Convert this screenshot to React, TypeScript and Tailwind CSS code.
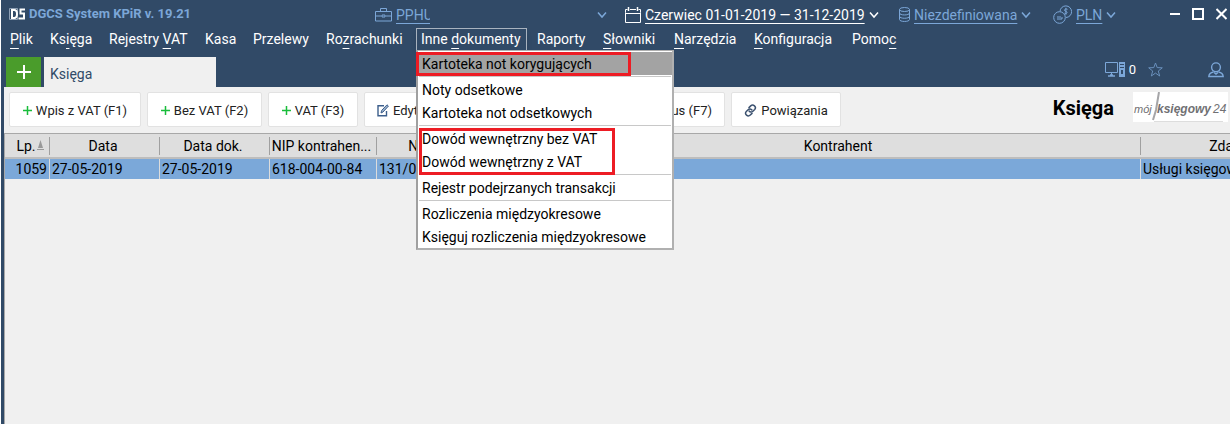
import React from 'react';

type MenuEntry = { before: string; key: string; after: string; open?: boolean };

const menuEntries: MenuEntry[] = [
  { before: '', key: 'P', after: 'lik' },
  { before: 'Ks', key: 'i', after: 'ęga' },
  { before: 'Rejestry ', key: 'V', after: 'AT' },
  { before: 'Kasa', key: '', after: '' },
  { before: 'Przelewy', key: '', after: '' },
  { before: 'Ro', key: 'z', after: 'rachunki' },
  { before: 'Inne ', key: 'd', after: 'okumenty', open: true },
  { before: 'Raporty', key: '', after: '' },
  { before: '', key: 'S', after: 'łowniki' },
  { before: '', key: 'N', after: 'arzędzia' },
  { before: '', key: 'K', after: 'onfiguracja' },
  { before: 'Pomo', key: 'c', after: '' },
];

const dropdownGroups = [
  ['Kartoteka not korygujących'],
  ['Noty odsetkowe', 'Kartoteka not odsetkowych'],
  ['Dowód wewnętrzny bez VAT', 'Dowód wewnętrzny z VAT'],
  ['Rejestr podejrzanych transakcji'],
  ['Rozliczenia międzyokresowe', 'Księguj rozliczenia międzyokresowe'],
];

function Chevron() {
  return (
    <svg width="10" height="8" viewBox="0 0 10 8" fill="none" stroke="currentColor" strokeWidth="1.5" className="shrink-0">
      <path d="M1 1.500 5 6l4-4.500" />
    </svg>
  );
}

function Logo() {
  return (
    <svg width="16" height="12" viewBox="0 0 16 12" className="shrink-0">
      <path d="M.5.5h8v11h-8z" fill="none" stroke="#8fa0b5" />
      <path d="M3 2h2.200C7 2 8 3.500 8 6s-1 4-2.800 4H3z" fill="none" stroke="#fff" strokeWidth="2" />
      <path d="M16 1.500h-4.500v4H15V10.500H9.500" fill="none" stroke="#fff" strokeWidth="2" />
    </svg>
  );
}

function Briefcase() {
  return (
    <svg width="17" height="15" viewBox="0 0 17 15" fill="none" stroke="currentColor" className="shrink-0">
      <path d="M.5 4.500h16v9.500H.5zM5.500 4.500v-3h6v3M.5 9h6M10.500 9h6M7 8h3v2H7z" />
    </svg>
  );
}

function Calendar() {
  return (
    <svg width="16" height="16" viewBox="0 0 16 16" fill="none" stroke="currentColor" className="shrink-0">
      <path d="M.5 5.500v10h15v-10M.5 5.500V2.500h2M5 2.500h6M13.500 2.500h2v3M0 6.500h16" />
      <path d="M3.500 0v4M12.500 0v4" strokeWidth="1.500" />
    </svg>
  );
}

function Database() {
  return (
    <svg width="11" height="15" viewBox="0 0 11 15" fill="none" stroke="currentColor" className="shrink-0">
      <ellipse cx="5.500" cy="2.500" rx="5" ry="2" />
      <path d="M.5 2.500v10c0 2.600 10 2.600 10 0v-10M.5 6c0 2.600 10 2.600 10 0M.5 9.300c0 2.600 10 2.600 10 0" />
    </svg>
  );
}

function Coins() {
  return (
    <svg width="19" height="19" viewBox="0 0 19 19" fill="none" stroke="currentColor" className="shrink-0">
      <path d="M7 6.500a5.800 5.800 0 1 1 6 6" />
      <circle cx="6.500" cy="12.500" r="5.800" />
      <path d="M14.500 4.300c-3-1.200-4 1.500-1.800 2 2.500.6 1.300 3-1.300 1.900M12.900 2.800v7M4 12h4M4 14h5V12" />
    </svg>
  );
}

function Pencil() {
  return (
    <svg width="12" height="13" viewBox="0 0 12 13" fill="none" stroke="#3d5f8c" className="shrink-0">
      <path d="M7 1.700H1v10h8.500V7" strokeWidth="1.400" />
      <path d="m4 9 .6-2.500L10 .8l1.400 1.300L6 8z" fill="#9bb2cd" />
    </svg>
  );
}

function LinkIcon() {
  return (
    <svg width="13" height="13" viewBox="0 0 13 13" fill="none" stroke="#3c5270" strokeWidth="1.500" strokeLinecap="round" className="shrink-0">
      <path d="m5 3.600 1.700-1.700c2.500-2.300 6.200 1 4 3.600L8.900 7.300c-1.200 1.100-2.900.9-3.800-.3" />
      <path d="M8 9.400 6.300 11c-2.500 2.400-6.200-1-4-3.500L4.100 5.700c1.200-1.100 2.900-.9 3.800.3" />
    </svg>
  );
}

function PlusSmall() {
  return (
    <svg width="9" height="9" viewBox="0 0 9 9" className="shrink-0">
      <path d="M4.500 0v9M0 4.500h9" stroke="#19bd3b" strokeWidth="1.500" />
    </svg>
  );
}

function Computer() {
  return (
    <svg width="20" height="15" viewBox="0 0 20 15" fill="none" stroke="currentColor" className="shrink-0">
      <path d="M.5.5h12v10H.5zM6.500 11v2" />
      <path d="M3 14h7M5 13h3" strokeWidth="1.500" />
      <path fillRule="evenodd" stroke="none" fill="currentColor" d="M14 0h6v15h-6zm1 2v1h4V2zm0 3v1h4V5zm1 3v4h2V8z" />
    </svg>
  );
}

function Star() {
  return (
    <svg width="15" height="15" viewBox="0 0 15 15" fill="none" stroke="currentColor" className="shrink-0 opacity-75">
      <path d="m7.500 1 1.700 4.600 5.100.2-4 3.200 1.400 5-4.200-2.900L3.300 14l1.400-5-4-3.200 5.100-.2z" />
    </svg>
  );
}

function User() {
  return (
    <svg width="16" height="16" viewBox="0 0 16 16" fill="none" stroke="currentColor" strokeWidth="1.400" className="shrink-0">
      <circle cx="8" cy="5.300" r="4.400" />
      <path d="M5.500 10C3 10.500 1 11.800.8 14.500h14.400c-.2-2.700-2.200-4-4.700-4.500M6 10.500l2 1.500 2-1.500" />
    </svg>
  );
}

function BrandMark() {
  return (
    <svg width="95" height="30" viewBox="0 0 95 30" role="img" aria-label="mójksięgowy24" className="shrink-0 bg-white">
      <path d="m26 0-3 18-3 10" stroke="#a5a5a8" strokeWidth="2" fill="none" />
      <path d="M21 29.500h69" stroke="#ddd" />
      <g fontStyle="italic" fill="#707073" fontFamily="'Liberation Sans', sans-serif" fontSize="12">
        <text x="1" y="21" fontSize="11">mój</text>
        <text x="24" y="21" fontWeight="700">księgowy</text>
        <text x="80" y="21">24</text>
      </g>
    </svg>
  );
}

function TitleBar() {
  return (
    <header className="flex h-7 items-center pt-px pl-[5px] text-[#7ca7d8]">
      <div className="flex w-[366px] items-center gap-1 pb-[2px]">
        <Logo />
        <h1 className="text-[13px] font-bold whitespace-nowrap">DGCS System KPiR v. 19.21</h1>
      </div>
      <button className="flex w-[232px] items-center gap-1">
        <Briefcase />
        <span className="w-[34px] overflow-hidden text-left underline underline-offset-3">PPHU</span>
        <span className="ml-auto"><Chevron /></span>
      </button>
      <button className="ml-[18px] flex w-[256px] items-center gap-1 whitespace-nowrap text-white">
        <Calendar />
        <span className="underline underline-offset-3">Czerwiec 01-01-2019 — 31-12-2019</span>
        <Chevron />
      </button>
      <button className="ml-[18px] flex w-[136px] items-center gap-1">
        <Database />
        <span className="underline underline-offset-3">Niezdefiniowana</span>
        <Chevron />
      </button>
      <button className="ml-[18px] flex items-center gap-1">
        <Coins />
        <span className="underline underline-offset-3">PLN</span>
        <Chevron />
      </button>
      <div className="ml-auto flex items-center gap-3 pr-[3px] pb-[2px] text-white">
        <button aria-label="Minimalizuj">
          <svg width="10" height="12" viewBox="0 0 10 12"><path d="M0 6h10" stroke="currentColor" strokeWidth="2" /></svg>
        </button>
        <button aria-label="Maksymalizuj">
          <svg width="12" height="12" viewBox="0 0 12 12"><path d="M1 1h10v10H1z" fill="none" stroke="currentColor" strokeWidth="2" /></svg>
        </button>
        <button aria-label="Zamknij">
          <svg width="11" height="12" viewBox="0 0 11 12"><path d="m.5 1 10 10M10.500 1l-10 10" stroke="currentColor" strokeWidth="2" /></svg>
        </button>
      </div>
    </header>
  );
}

function DropdownMenu() {
  return (
    <div role="menu" className="absolute top-full -left-px z-10 w-[258px] border-2 border-t border-[#b0b0b0] border-l-[#a0a0a0] bg-white pt-px text-black">
      {dropdownGroups.map((group, g) => (
        <div key={group[0]} role="group">
          {g > 0 && <div className="mx-px my-px h-px bg-[#c8c8c8]" />}
          {group.map((label) => (
            <button
              key={label}
              role="menuitem"
              className={`block h-[23px] w-full pl-1 text-left whitespace-nowrap ${g === 0 ? 'bg-[#a3a3a3]' : ''}`}
            >
              {label}
            </button>
          ))}
        </div>
      ))}
      <div className="pointer-events-none absolute top-px -left-[2px] h-6 w-[215px] border-3 border-[#ed1c24]" />
      <div className="pointer-events-none absolute top-[77px] left-px h-[47px] w-[196px] border-3 border-[#ed1c24]" />
    </div>
  );
}

function MenuBar() {
  return (
    <nav className="grid h-[29px] grid-cols-[40px_59px_96px_48px_73px_95px_116px_66px_71px_80px_98px_auto] justify-start pl-[6px] whitespace-nowrap text-white">
      {menuEntries.map((entry) => (
        <div
          key={entry.before + entry.key + entry.after}
          className={`relative h-[22px] ${entry.open ? '-ml-[5px] w-[111px] border border-b-0 border-[#a9b3bf] pl-1 shadow-md' : 'pt-px'}`}
        >
          <button className="block h-5">
            {entry.before}
            {entry.key && <span className="underline underline-offset-4">{entry.key}</span>}
            {entry.after}
          </button>
          {entry.open && <DropdownMenu />}
        </div>
      ))}
    </nav>
  );
}

function TabBar() {
  return (
    <div className="flex h-[30px] items-stretch pl-[2px] text-[#7ca7d8]">
      <button aria-label="Nowa karta" className="flex w-[35px] items-center justify-center bg-[#4a9c2b]">
        <svg width="14" height="14" viewBox="0 0 14 14"><path d="M7 0v14M0 7h14" stroke="#fff" strokeWidth="2" /></svg>
      </button>
      <button className="ml-[3px] w-[172px] bg-[#f0f0f0] pt-1 pl-[6px] text-left text-[#314a67]">Księga</button>
      <div className="ml-auto flex items-center pr-[6px] pb-[5px]">
        <Computer />
        <span className="ml-1 text-[13px] text-white">0</span>
        <button aria-label="Ulubione" className="ml-3"><Star /></button>
        <button aria-label="Użytkownik" className="ml-[45px]"><User /></button>
      </div>
    </div>
  );
}

const toolButton = 'flex h-[35px] shrink-0 items-center rounded-xs border border-[#e2e2e2] bg-white pt-[2px] whitespace-nowrap text-[13px] text-[#222]';

function Toolbar() {
  return (
    <div className="flex h-[46px] items-start gap-[6px] pt-[5px] pl-[5px]">
      <button className={`${toolButton} w-[132px] justify-center gap-1`}><PlusSmall />Wpis z VAT (F1)</button>
      <button className={`${toolButton} w-[115px] justify-center gap-1`}><PlusSmall />Bez VAT (F2)</button>
      <button className={`${toolButton} w-[90px] justify-center gap-1`}><PlusSmall />VAT (F3)</button>
      <button className={`${toolButton} w-[112px] gap-1 pl-3`}><Pencil />Edytuj (F4)</button>
      <button className={`${toolButton} w-[112px] justify-center`}>Usuń (F5)</button>
      <button className={`${toolButton} w-[125px] justify-end pr-3`}>Status (F7)</button>
      <button className={`${toolButton} w-[110px] justify-center gap-1`}><LinkIcon />Powiązania</button>
      <div className="ml-auto flex shrink-0 gap-[19px] pr-[2px]">
        <h2 className="text-[20px] leading-8 font-bold text-black">Księga</h2>
        <BrandMark />
      </div>
    </div>
  );
}

const th = 'h-[25px] overflow-hidden border-b-2 border-[#bdbdbd] p-0 text-center font-normal whitespace-nowrap';
const td = 'h-5 overflow-hidden border-l border-[#dcdcdc] p-0 pl-[2px] whitespace-nowrap';

function HeadCell({ children, divider = true }: { children: React.ReactNode; divider?: boolean }) {
  return (
    <th scope="col" className={th}>
      <div className={`flex h-[18px] items-center justify-center ${divider ? 'border-l border-[#a0a0a0] pr-[3px]' : ''}`}>{children}</div>
    </th>
  );
}

function Ledger() {
  return (
    <div className="flex-1 overflow-hidden border-t border-l border-[#a8a8a8]">
      <table className="w-[calc(100%+196px)] table-fixed border-separate border-spacing-0 text-black">
        <colgroup>
          <col className="w-11" />
          <col className="w-[110px]" />
          <col className="w-[110px]" />
          <col className="w-[107px]" />
          <col className="w-[162px]" />
          <col />
          <col className="w-[286px]" />
        </colgroup>
        <thead className="bg-[#dedede]">
          <tr>
            <HeadCell divider={false}>
              <span className="pl-[6px]">Lp.</span>
              <svg width="7" height="11" viewBox="0 0 7 11" fill="#999" className="ml-px"><path d="M3.500 0 6 8H1zM0 9h7v1H0z" /></svg>
            </HeadCell>
            <HeadCell>Data</HeadCell>
            <HeadCell>Data dok.</HeadCell>
            <HeadCell>NIP kontrahen...</HeadCell>
            <HeadCell>Numer dowodu</HeadCell>
            <HeadCell>Kontrahent</HeadCell>
            <HeadCell>Zdarzenie gospodarcze</HeadCell>
          </tr>
        </thead>
        <tbody className="bg-[#7ba8d9]">
          <tr>
            <td className="h-5 p-0 pr-[2px] text-right">1059</td>
            <td className={td}>27-05-2019</td>
            <td className={td}>27-05-2019</td>
            <td className={td}>618-004-00-84</td>
            <td className={td}>131/05</td>
            <td className={td}></td>
            <td className={td}>Usługi księgowe</td>
          </tr>
        </tbody>
      </table>
    </div>
  );
}

export default function App() {
  return (
    <div className="flex min-h-screen w-full overflow-hidden border-l border-white bg-[#314a67] pl-[3px] font-['Roboto',sans-serif] text-[14px] leading-5">
      <div className="flex min-w-0 flex-1 flex-col">
        <TitleBar />
        <MenuBar />
        <TabBar />
        <main className="flex flex-1 flex-col bg-[#f0f0f0]">
          <Toolbar />
          <Ledger />
        </main>
      </div>
    </div>
  );
}
